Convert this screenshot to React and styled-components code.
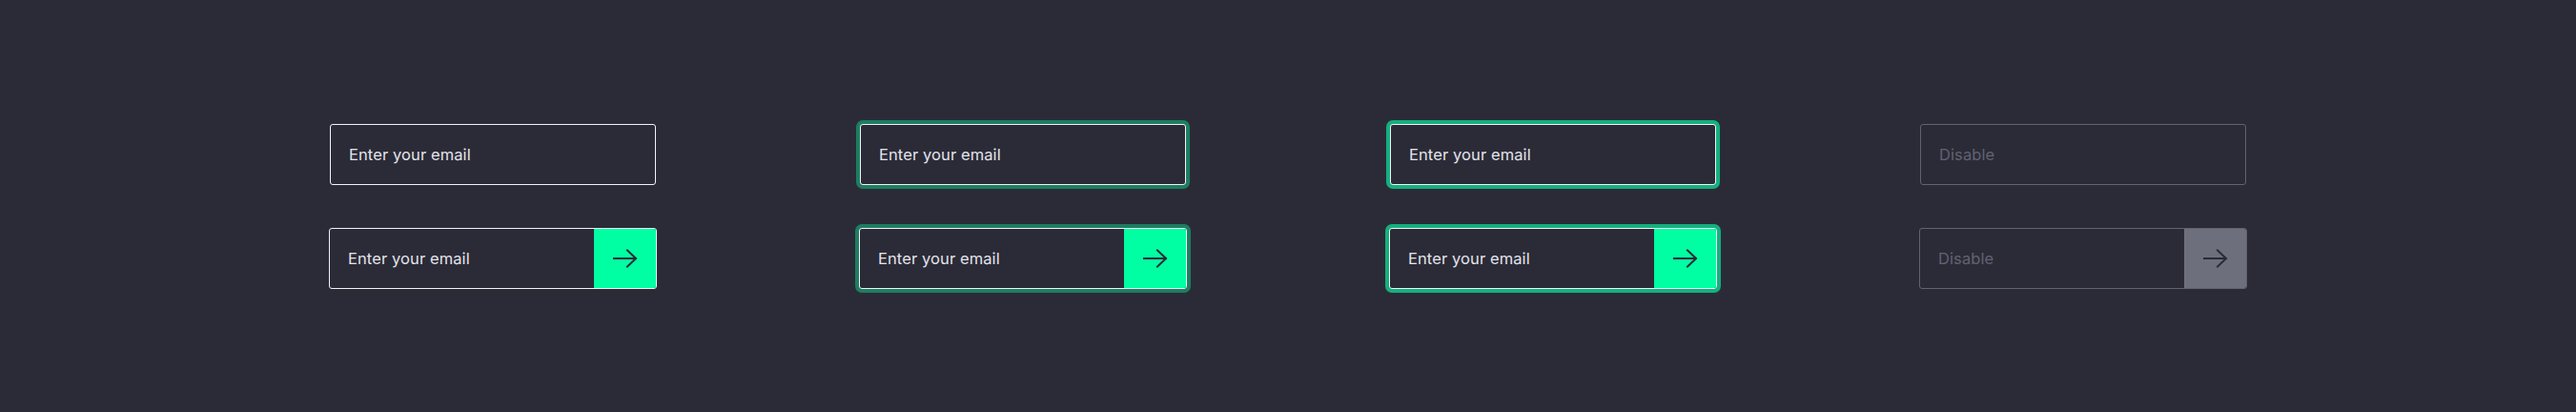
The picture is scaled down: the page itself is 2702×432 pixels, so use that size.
import React from "react";
import styled, { createGlobalStyle } from "styled-components";

const Global = createGlobalStyle`
  html, body { margin: 0; padding: 0; background: #2b2b38; }
  body { font-family: "Inter", "Noto Sans", sans-serif; }
`;

const Page = styled.div`
  width: 2702px;
  height: 432px;
  display: flex;
  justify-content: center;
  align-items: center;
  gap: 212px;
  background: #2b2b38;
`;

const Column = styled.div`
  display: flex;
  flex-direction: column;
  align-items: center;
  gap: 45px;
`;

const rings = {
  default: "none",
  hover: "0 0 0 4px #1e7d62",
  focus: "0 0 0 4px #14b07e",
  disabled: "none",
};

const Field = styled.div`
  box-sizing: border-box;
  width: ${(p) => (p.$wide ? 344 : 342)}px;
  height: 64px;
  display: flex;
  align-items: stretch;
  border: 1px solid ${(p) => (p.$state === "disabled" ? "#62626f" : "#f2f2f5")};
  border-radius: 3px;
  box-shadow: ${(p) => rings[p.$state]};
  background: #2b2b38;
  overflow: hidden;
`;

const Label = styled.span`
  flex: 1;
  display: flex;
  align-items: center;
  padding-left: 19px;
  font-size: 16.5px;
  letter-spacing: 0.1px;
  color: ${(p) => (p.$disabled ? "#626271" : "#e4e4ea")};
`;

const Button = styled.div`
  width: 66px;
  margin: -1px -1px -1px 0;
  display: flex;
  align-items: center;
  justify-content: center;
  background: ${(p) => (p.$disabled ? "#6e6f7c" : "#00ffa3")};
  border-radius: 0 3px 3px 0;
`;

const Arrow = () => (
  <svg width="26" height="20" viewBox="0 0 26 20" fill="none">
    <path d="M1 10H24M15 1.5L24 10L15 18.5" stroke="#2b2b38" strokeWidth="2" strokeLinecap="square" />
  </svg>
);

const states = [
  { state: "default", text: "Enter your email" },
  { state: "hover", text: "Enter your email" },
  { state: "focus", text: "Enter your email" },
  { state: "disabled", text: "Disable" },
];

export default function App() {
  return (
    <>
      <Global />
      <Page>
        {states.map((s) => (
          <Column key={s.state}>
            <Field $state={s.state}>
              <Label $disabled={s.state === "disabled"}>{s.text}</Label>
            </Field>
            <Field $state={s.state} $wide>
              <Label $disabled={s.state === "disabled"}>{s.text}</Label>
              <Button $disabled={s.state === "disabled"}>
                <Arrow />
              </Button>
            </Field>
          </Column>
        ))}
      </Page>
    </>
  );
}
